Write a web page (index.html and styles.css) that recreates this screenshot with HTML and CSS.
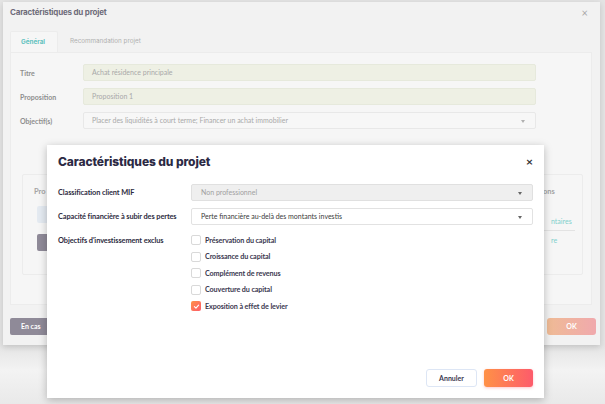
FILE: index.html
```html
<!DOCTYPE html>
<html lang="fr">
<head>
    <meta charset="UTF-8">
    <meta name="viewport" content="width=device-width, initial-scale=1.0">
    <title>Caractéristiques du projet</title>
    <link rel="stylesheet" href="styles.css">
</head>
<body>
    <div class="back-modal">
        <div class="back-header">
            <span class="back-title">Caractéristiques du projet</span>
            <span class="back-close">&times;</span>
        </div>
        <div class="tabs">
            <div class="tab active">Général</div>
            <div class="tab">Recommandation projet</div>
        </div>
        <div class="panel">
            <div class="back-row">
                <div class="back-label">Titre</div>
                <div class="back-input green">Achat résidence principale</div>
            </div>
            <div class="back-row">
                <div class="back-label">Proposition</div>
                <div class="back-input green">Proposition 1</div>
            </div>
            <div class="back-row">
                <div class="back-label">Objectif(s)</div>
                <div class="back-input">Placer des liquidités à court terme; Financer un achat immobilier<span class="caret small"></span></div>
            </div>
            <!-- only the parts not hidden by the open dialog -->
            <div class="inner-box">
                <div class="inner-left">
                    <div class="inner-head">Pro</div>
                    <div class="block blue"></div>
                    <div class="block dark"></div>
                </div>
                <div class="inner-right">
                    <div class="inner-head">ons</div>
                    <div class="link">ntaires</div>
                    <div class="link sep">re</div>
                </div>
            </div>
        </div>
        <div class="back-footer">
            <div class="btn-gray">En cas</div>
            <div class="btn-ok faded">OK</div>
        </div>
    </div>

    <div class="modal">
        <div class="modal-header">
            <h2>Caractéristiques du projet</h2>
            <span class="close">&times;</span>
        </div>
        <div class="form-row">
            <div class="label">Classification client MIF</div>
            <div class="select disabled">Non professionnel<span class="caret"></span></div>
        </div>
        <div class="form-row">
            <div class="label">Capacité financière à subir des pertes</div>
            <div class="select">Perte financière au-delà des montants investis<span class="caret"></span></div>
        </div>
        <div class="form-row">
            <div class="label">Objectifs d'investissement exclus</div>
            <div class="checks" id="checks"></div>
        </div>
        <div class="modal-footer">
            <button class="btn-cancel">Annuler</button>
            <button class="btn-ok">OK</button>
        </div>
    </div>

    <script>
        const objectifs = [
            ["Préservation du capital", false],
            ["Croissance du capital", false],
            ["Complément de revenus", false],
            ["Couverture du capital", false],
            ["Exposition à effet de levier", true]
        ];

        const checks = document.getElementById("checks");
        objectifs.forEach(([name, checked]) => {
            const row = document.createElement("label");
            row.className = "check-row";
            row.innerHTML = `
                <span class="box${checked ? ' checked' : ''}">
                    ${checked ? '<svg viewBox="0 0 10 10" width="7" height="7"><path d="M2 5.2 L4.2 7.2 L8 3" fill="none" stroke="#fff" stroke-width="1.6" stroke-linecap="round" stroke-linejoin="round"/></svg>' : ''}
                </span>
                <span class="check-text">${name}</span>
            `;
            checks.appendChild(row);
        });
    </script>
</body>
</html>
```

FILE: styles.css
```css
body { margin: 0; width: 605px; height: 404px; overflow: hidden; background: linear-gradient(#e4e4e4 0, #e4e4e4 345px, #f3f3f3 370px, #e9e9e9 404px); font-family: Lato, "Open Sans", sans-serif; position: relative; }

.back-modal { margin: 2px 5px 0 3px; height: 343px; background: #f2f2f2; box-shadow: 0 2px 6px rgba(0,0,0,0.15); padding: 0 8px 0 7px; box-sizing: border-box; display: flex; flex-direction: column; }
.back-header { display: flex; justify-content: space-between; align-items: center; height: 20px; }
.back-title { font-family: Inter, sans-serif; font-size: 8px; font-weight: 700; color: #6e6c7a; letter-spacing: -0.2px; }
.back-close { font-size: 11px; color: #a9a9a9; margin-right: 4px; }
.tabs { display: flex; margin-top: 9px; height: 21px; }
.tab { font-family: Inter, sans-serif; font-size: 6.3px; color: #b0b0b0; padding: 0 12px; line-height: 21px; }
.tab.active { background: #f6f6f6; color: #62c2bf; font-weight: 700; border: 1px solid #ececec; border-bottom: none; border-radius: 2px 2px 0 0; padding: 0 12px 0 10px; }
.panel { background: #f6f6f6; border: 1px solid #ececec; height: 253px; box-sizing: border-box; padding: 11px 55px 0 9px; }
.back-row { display: flex; align-items: center; margin-bottom: 7px; }
.back-label { width: 63px; font-size: 7px; font-weight: 700; color: #8e8e8e; }
.back-input { flex: 1; height: 17px; border: 1px solid #e8e8e8; border-radius: 2px; background: #f7f7f7; box-sizing: border-box; font-size: 7px; color: #a9a9a9; padding-left: 8px; line-height: 15px; position: relative; }
.back-input.green { background: #eef0e4; border-color: #e6e9dc; }
.caret { position: absolute; right: 10px; top: 7px; width: 0; height: 0; border-left: 2.5px solid transparent; border-right: 2.5px solid transparent; border-top: 3px solid #666; }
.caret.small { border-top-color: #b0b0b0; }
.inner-box { margin: 45px -47px 0 2px; height: 99px; border: 1px solid #ececec; border-radius: 2px; display: flex; justify-content: space-between; padding: 0 0 0 11px; }
.inner-left { padding-top: 12px; width: 13px; }
.inner-head { font-size: 7.5px; color: #a4a4a4; font-weight: 700; }
.block { width: 10px; height: 17px; border-radius: 2px 0 0 2px; margin: 11px 0 0 3px; }
.block.blue { background: #e4eaf1; margin-top: 10px; }
.block.dark { background: #8f8a98; }
.inner-right { padding-top: 12px; width: 39px; box-sizing: border-box; padding-right: 7px; }
.link { font-size: 7px; color: #7fd0cc; margin-top: 21px; padding-left: 8px; }
.link.sep { border-top: 1px solid #e3e3e3; padding-top: 5px; margin-top: 5px; margin-left: -3px; padding-left: 11px; }
.back-footer { display: flex; justify-content: space-between; margin-top: 13px; }
.btn-gray { height: 17px; width: 37px; white-space: nowrap; background: #8f8a98; color: #fff; border-radius: 2px 0 0 2px; font-size: 7px; font-weight: 700; line-height: 17px; padding-left: 11px; box-sizing: border-box; }
.btn-ok { height: 18px; width: 49px; border: none; border-radius: 3px; background: linear-gradient(90deg, #ff9147, #fd5b6b); color: #fff; font-family: Lato, sans-serif; font-size: 7px; font-weight: 700; box-shadow: 0 1px 3px rgba(253,91,107,0.35); }
.back-footer .btn-ok { line-height: 17px; text-align: center; height: 17px; margin-right: -4px; }
.btn-ok.faded { background: linear-gradient(90deg, #efbb95, #f0a9ad); box-shadow: none; }

.modal { position: absolute; left: 47px; top: 145px; width: 497px; height: 253px; background: #fff; box-shadow: 0 2px 8px rgba(0,0,0,0.25); box-sizing: border-box; padding: 0 11px; }
.modal-header { display: flex; justify-content: space-between; align-items: center; height: 33px; }
.modal-header h2 { margin: 0; font-family: Inter, sans-serif; font-size: 12px; font-weight: 800; color: #2c2a44; letter-spacing: -0.1px; }
.close { font-size: 12px; font-weight: 700; color: #333; margin-right: 0; }
.form-row { display: flex; align-items: flex-start; margin-bottom: 7px; }
.form-row:nth-child(2) { margin-top: 6px; }
.label { width: 133px; font-size: 7.4px; font-weight: 700; color: #2e2c42; line-height: 17px; letter-spacing: -0.1px; }
.form-row:last-of-type .label { line-height: 14px; }
.select { flex: 1; height: 17px; border: 1px solid #e2e2e2; border-radius: 2px; box-sizing: border-box; font-size: 7px; color: #3a3a3a; padding-left: 9px; line-height: 15px; position: relative; }
.select.disabled { background: #efefef; color: #a0a0a0; border-color: #e0e0e0; }
.checks { display: flex; flex-direction: column; }
.check-row { display: flex; align-items: center; height: 16.5px; }
.box { width: 10px; height: 10px; border: 1px solid #d9d9d9; border-radius: 2px; box-sizing: border-box; display: flex; align-items: center; justify-content: center; margin-right: 4px; }
.box.checked { border: none; background: linear-gradient(135deg, #ff9147, #fd5b6b); }
.check-text { font-size: 7.2px; font-weight: 700; color: #3a384f; letter-spacing: -0.1px; }
.modal-footer { position: absolute; right: 11px; bottom: 11px; display: flex; gap: 7px; }
.btn-cancel { height: 18px; width: 51px; background: #fff; border: 1px solid #dde6f5; border-radius: 3px; font-family: Lato, sans-serif; font-size: 7px; font-weight: 700; color: #3a384f; }
```
